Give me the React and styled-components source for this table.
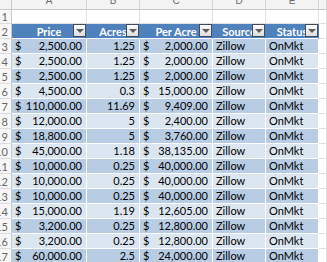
import styled, { createGlobalStyle } from "styled-components";

const GlobalStyle = createGlobalStyle`
  html, body {
    margin: 0;
    padding: 0;
    background: #ffffff;
  }
  body {
    font-family: Lato, "Liberation Sans", sans-serif;
  }
`;

const rows = [
  [2500, 1.25, 2000],
  [2500, 1.25, 2000],
  [2500, 1.25, 2000],
  [4500, 0.3, 15000],
  [110000, 11.69, 9409],
  [12000, 5, 2400],
  [18800, 5, 3760],
  [45000, 1.18, 38135],
  [10000, 0.25, 40000],
  [10000, 0.25, 40000],
  [10000, 0.25, 40000],
  [15000, 1.19, 12605],
  [3200, 0.25, 12800],
  [3200, 0.25, 12800],
  [60000, 2.5, 24000],
];

const headers = ["Price", "Acres", "Per Acre", "Source", "Status"];
const letters = ["A", "B", "C", "D", "E", ""];

const money = (n) =>
  n.toLocaleString("en-US", { minimumFractionDigits: 2, maximumFractionDigits: 2 });

const Sheet = styled.div`
  width: 327px;
  height: 262px;
  overflow: hidden;
  display: grid;
  grid-template-columns: 12px 75px 53px 73px 53px 53px 1fr;
  grid-template-rows: 10px 14px repeat(16, 15px);
  font-size: 11px;
  color: #000;
`;

const Corner = styled.div`
  background: #f3f3f3;
  border-right: 1px solid #c9c9c9;
  border-bottom: 1px solid #c9c9c9;
`;

const ColHead = styled.div`
  background: #f3f3f3;
  border-right: 1px solid #d4d4d4;
  border-bottom: 1px solid #c9c9c9;
  display: flex;
  align-items: flex-end;
  justify-content: center;
  overflow: hidden;
  color: #6b6b6b;
  font-family: "Liberation Sans", sans-serif;
  font-size: 10px;
  line-height: 17px;
`;

const RowHead = styled.div`
  background: #f7f7f7;
  border-right: 1px solid #c9c9c9;
  border-bottom: 1px solid #dcdcdc;
  display: flex;
  justify-content: flex-end;
  align-items: center;
  overflow: hidden;
  padding-right: 3px;
  color: #666;
  font-size: 11px;
  white-space: nowrap;
`;

const Blank = styled.div`
  background: #fff;
  border-right: 1px solid #e1e1e1;
  border-bottom: 1px solid #e1e1e1;
`;

const HeadCell = styled.div`
  position: relative;
  background: #4f81bd;
  border-right: 1px solid #4f81bd;
  border-bottom: 1px solid #ffffff;
  display: flex;
  align-items: center;
  justify-content: center;
  overflow: hidden;
  color: #fff;
  font-weight: 700;
  white-space: nowrap;
`;

const FilterButton = styled.span`
  position: absolute;
  right: 0;
  top: 0;
  width: 13px;
  height: 13px;
  box-sizing: border-box;
  border: 1px solid #3e4c5c;
  background: linear-gradient(#fbfbfb, #dedede);
  display: flex;
  align-items: center;
  justify-content: center;

  &::after {
    content: "";
    border-left: 4px solid transparent;
    border-right: 4px solid transparent;
    border-top: 4px solid #5c5c5c;
    margin-top: 1px;
  }
`;

const DataCell = styled.div`
  background: ${(p) => (p.$band ? "#b8cce4" : "#dce6f1")};
  border-right: 1px solid #ffffff;
  border-bottom: 1px solid #ffffff;
  display: flex;
  align-items: center;
  justify-content: ${(p) => (p.$align === "right" ? "flex-end" : p.$align === "split" ? "space-between" : "flex-start")};
  padding: 0 4px 0 3px;
  overflow: hidden;
  white-space: nowrap;
  line-height: 14px;
`;

export default function App() {
  return (
    <>
      <GlobalStyle />
      <Sheet>
        <Corner />
        {letters.map((l, i) => (
          <ColHead key={i}>{l}</ColHead>
        ))}

        <RowHead>1</RowHead>
        {letters.map((_, i) => (
          <Blank key={i} />
        ))}

        <RowHead>2</RowHead>
        {headers.map((h) => (
          <HeadCell key={h}>
            {h}
            <FilterButton />
          </HeadCell>
        ))}
        <Blank />

        {rows.map(([price, acres, per], i) => {
          const band = i % 2 === 0;
          return [
            <RowHead key={"n" + i}>{i + 3}</RowHead>,
            <DataCell key={"a" + i} $band={band} $align="split">
              <span>$</span>
              <span>{money(price)}</span>
            </DataCell>,
            <DataCell key={"b" + i} $band={band} $align="right">
              {acres}
            </DataCell>,
            <DataCell key={"c" + i} $band={band} $align="split">
              <span>$</span>
              <span>{money(per)}</span>
            </DataCell>,
            <DataCell key={"d" + i} $band={band}>
              Zillow
            </DataCell>,
            <DataCell key={"e" + i} $band={band}>
              OnMkt
            </DataCell>,
            <Blank key={"f" + i} />,
          ];
        })}
      </Sheet>
    </>
  );
}
